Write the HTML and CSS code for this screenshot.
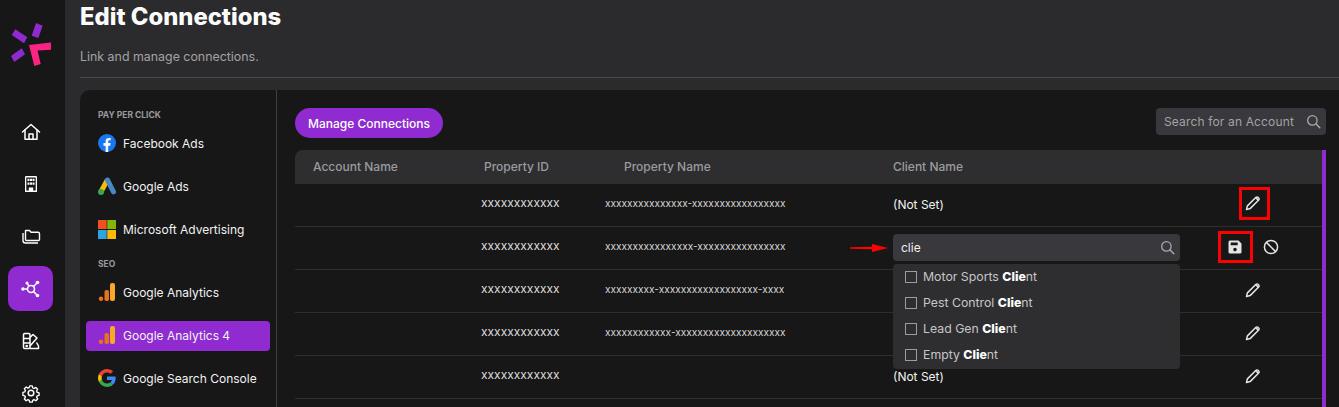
FILE: index.html
```html
<!DOCTYPE html>
<html lang="en">
<head>
    <meta charset="UTF-8">
    <meta name="viewport" content="width=device-width, initial-scale=1.0">
    <title>Edit Connections</title>
    <link rel="stylesheet" href="styles.css">
</head>
<body>

<svg class="sprites" width="0" height="0">
    <symbol id="pencil" viewBox="0 0 16 16">
        <path d="M1.500 14.500l.9-3.600 8.600-8.600a1.400 1.400 0 0 1 2 0l.7.7a1.400 1.400 0 0 1 0 2l-8.600 8.600z" fill="none" stroke="currentColor" stroke-width="1.500" stroke-linejoin="round"/>
        <path d="M11.200 1.900l2.900 2.900-1.200 1.200-2.900-2.900z" fill="currentColor"/>
    </symbol>
    <symbol id="search" viewBox="0 0 16 16">
        <circle cx="6.800" cy="6.800" r="5" fill="none" stroke="currentColor" stroke-width="1.400"/>
        <path d="M10.500 10.500l4.200 4.200" stroke="currentColor" stroke-width="1.600" stroke-linecap="round"/>
    </symbol>
    <symbol id="analytics" viewBox="0 0 18 20">
        <rect x="12" y="1" width="5" height="18" rx="2" fill="#f9a825"/>
        <rect x="6.500" y="8" width="4.500" height="11" rx="1.800" fill="#e8711a"/>
        <circle cx="3" cy="16.800" r="2.200" fill="#e8711a"/>
    </symbol>
</svg>

<div class="app">
    <aside class="rail">
        <svg class="logo" width="65" height="90" viewBox="0 0 65 90">
            <polygon points="36,23 42.700,25.700 38.300,38 31.700,35.700" fill="#8e2bd0"/>
            <polygon points="15.300,29.300 27.300,37.300 24,43.300 11.700,35" fill="#8e2bd0"/>
            <polygon points="11,56 21.700,48.300 25,54.300 14.300,62" fill="#8e2bd0"/>
            <polygon points="29,45 51,42.500 51,49.700 37.500,50.500 40.700,64 34.300,66" fill="#ff2384"/>
        </svg>
        <nav class="rail-icons">
            <a class="rail-link">
                <svg width="20" height="20" viewBox="0 1 20 20" fill="none" stroke="#fff" stroke-width="1.500" stroke-linejoin="round" stroke-linecap="round"><path d="M1.500 10L10 2.500l8.500 7.500"/><path d="M4 8v9.200h12V8"/><path d="M8 17v-5h4v5"/></svg>
            </a>
            <a class="rail-link">
                <svg width="20" height="20" viewBox="0 1.500 20 20"><path fill-rule="evenodd" fill="#fff" d="M5 2.500h10a1 1 0 0 1 1 1v15H4v-15a1 1 0 0 1 1-1zM5.300 4v13h2.500v-3h4.400v3h2.500V4zM6.500 5.200h2v2.300h-2zM9 5.200h2v2.300H9zM11.500 5.200h2v2.300h-2zM6.500 9h2v2.300h-2zM9 9h2v2.300H9zM11.500 9h2v2.300h-2z"/></svg>
            </a>
            <a class="rail-link">
                <svg width="20" height="20" viewBox="0 1 20 20" fill="none" stroke="#fff" stroke-width="1.400" stroke-linejoin="round"><path d="M4.500 13.500V4.500h4l1.500 1.700h7a1.500 1.500 0 0 1 1.500 1.500v5.800a1 1 0 0 1-1 1h-12a1 1 0 0 1-1-1z"/><path d="M2 7v7.500a2.500 2.500 0 0 0 2.500 2.500h12.500"/></svg>
            </a>
            <a class="rail-link active">
                <svg width="22" height="22" viewBox="0 0 22 22" fill="none" stroke="#fff" stroke-width="1.600"><circle cx="11" cy="11" r="3.500"/><path d="M13.500 8.500l3-3M13.500 13.500l3 3M7.500 11h-3M9 8L7.500 6"/><circle cx="17.500" cy="4.500" r="1.800" fill="#fff" stroke="none"/><circle cx="17.500" cy="17.500" r="1.800" fill="#fff" stroke="none"/><circle cx="3" cy="11" r="1.800" fill="#fff" stroke="none"/><circle cx="7" cy="5" r="1.500" fill="#fff" stroke="none"/></svg>
            </a>
            <a class="rail-link">
                <svg width="20" height="20" viewBox="0 0 20 20" fill="none" stroke="#fff" stroke-width="1.500" stroke-linejoin="round"><rect x="2.500" y="2.500" width="6.500" height="15" rx="1.200"/><path d="M2.500 7.500H9M2.500 12H9"/><path d="M9 6.500l3-3 4 3.500-7 8"/><path d="M9 17.500h8.500v-2.500l-2-3.500"/><circle cx="5.700" cy="15" r=".6" fill="#fff"/></svg>
            </a>
            <a class="rail-link">
                <svg width="20" height="20" viewBox="0 0 20 20" fill="none" stroke="#fff" stroke-width="1.500" stroke-linejoin="round"><circle cx="10" cy="10" r="2.800"/><path d="M8.600 2h2.800l.5 2.300 1.500.7 2-1.200 2 2-1.200 2 .7 1.500 2.100.5v2.800l-2.100.6-.7 1.400 1.200 2-2 2-2-1.200-1.500.7-.5 2.100H8.600l-.5-2.100-1.500-.7-2 1.200-2-2 1.200-2-.7-1.400-2.100-.6V9.300l2.100-.5.700-1.500-1.200-2 2-2 2 1.200 1.500-.7z" transform="translate(1 1) scale(.9)"/></svg>
            </a>
        </nav>
    </aside>

    <main class="main">
        <header class="page-head">
            <h1>Edit Connections</h1>
            <p>Link and manage connections.</p>
        </header>

        <section class="panel">
            <aside class="side">
                <div class="side-group">
                    <h4>PAY PER CLICK</h4>
                    <a class="side-item">
                        <svg width="18" height="18" viewBox="0 0 18 18"><circle cx="9" cy="9" r="9" fill="#1877f2"/><path d="M7.600 18v-6.300H5.500V9h2.100V7.300c0-2.200 1.300-3.400 3.200-3.400.9 0 1.900.2 1.900.2v2.100h-1.100c-1.100 0-1.400.6-1.400 1.300V9h2.400l-.4 2.700h-2V18z" fill="#fff"/></svg>
                        Facebook Ads
                    </a>
                    <a class="side-item">
                        <svg width="18" height="18" viewBox="0 0 18 18"><path d="M9.300 3L3 14.800" stroke="#fbbc04" stroke-width="5" fill="none"/><path d="M9.500 3l6 11.800" stroke="#4a86c8" stroke-width="5" stroke-linecap="round" fill="none"/><circle cx="3" cy="15" r="3" fill="#34a853"/></svg>
                        Google Ads
                    </a>
                    <a class="side-item">
                        <svg width="18" height="19" viewBox="0 0 18 19"><rect width="8.700" height="9" fill="#f25022"/><rect x="9.300" width="8.700" height="9" fill="#7fba00"/><rect y="10" width="8.700" height="9" fill="#2da5e0"/><rect x="9.300" y="10" width="8.700" height="9" fill="#ffb900"/></svg>
                        Microsoft Advertising
                    </a>
                </div>
                <div class="side-group">
                    <h4>SEO</h4>
                    <a class="side-item">
                        <svg width="18" height="20"><use href="#analytics"/></svg>
                        Google Analytics
                    </a>
                    <a class="side-item active">
                        <svg width="18" height="20"><use href="#analytics"/></svg>
                        Google Analytics 4
                    </a>
                    <a class="side-item">
                        <svg width="18" height="18" viewBox="0 0 48 48">
                            <path fill="#EA4335" d="M24 9.500c3.540 0 6.710 1.220 9.210 3.600l6.850-6.850C35.900 2.380 30.470 0 24 0 14.620 0 6.510 5.380 2.560 13.220l7.980 6.190C12.430 13.720 17.740 9.500 24 9.500z"/>
                            <path fill="#4285F4" d="M46.980 24.550c0-1.570-.15-3.090-.38-4.550H24v9.020h12.940c-.58 2.960-2.260 5.480-4.780 7.180l7.730 6c4.510-4.180 7.090-10.360 7.090-17.650z"/>
                            <path fill="#FBBC05" d="M10.530 28.590c-.48-1.450-.76-2.990-.76-4.590s.27-3.140.76-4.590l-7.980-6.190C.92 16.460 0 20.120 0 24c0 3.880.92 7.540 2.560 10.780l7.970-6.190z"/>
                            <path fill="#34A853" d="M24 48c6.480 0 11.930-2.130 15.890-5.810l-7.730-6c-2.150 1.450-4.920 2.300-8.160 2.300-6.260 0-11.570-4.220-13.470-9.910l-7.980 6.190C6.510 42.620 14.620 48 24 48z"/>
                        </svg>
                        Google Search Console
                    </a>
                </div>
            </aside>

            <div class="content">
                <div class="toolbar">
                    <button class="btn-manage">Manage Connections</button>
                    <div class="search-box account-search">
                        <span>Search for an Account</span>
                        <svg width="15" height="15"><use href="#search"/></svg>
                    </div>
                </div>

                <div class="table-wrap">
                    <div class="table">
                        <div class="table-head">
                            <span>Account Name</span>
                            <span>Property ID</span>
                            <span>Property Name</span>
                            <span>Client Name</span>
                        </div>

                        <div class="row">
                            <span></span>
                            <span class="prop-id">xxxxxxxxxxxx</span>
                            <span class="prop-name">xxxxxxxxxxxxxxx-xxxxxxxxxxxxxxxxx</span>
                            <span class="client">(Not Set)</span>
                            <div class="actions">
                                <span class="icon-btn marked pencil-mark"><svg width="16" height="16"><use href="#pencil"/></svg></span>
                            </div>
                        </div>

                        <div class="row">
                            <span></span>
                            <span class="prop-id">xxxxxxxxxxxx</span>
                            <span class="prop-name">xxxxxxxxxxxxxxxx-xxxxxxxxxxxxxxxx</span>
                            <div class="client-edit">
                                <svg class="arrow" width="38" height="10" viewBox="0 0 38 10"><path d="M0 4.200L22 3.800V1L38 5 22 9V6.200L0 5.800z" fill="#f00"/></svg>
                                <div class="search-box client-search">
                                    <span>clie</span>
                                    <svg width="15" height="15"><use href="#search"/></svg>
                                </div>
                                <ul class="dropdown">
                                    <li><i class="check"></i><span>Motor Sports <b>Clie</b>nt</span></li>
                                    <li><i class="check"></i><span>Pest Control <b>Clie</b>nt</span></li>
                                    <li><i class="check"></i><span>Lead Gen <b>Clie</b>nt</span></li>
                                    <li><i class="check"></i><span>Empty <b>Clie</b>nt</span></li>
                                </ul>
                            </div>
                            <div class="actions editing">
                                <span class="icon-btn marked save-mark">
                                    <svg width="16" height="16" viewBox="0 0 16 16"><path fill="currentColor" fill-rule="evenodd" d="M3 1.500h8.500L14.500 4.500V13a1.500 1.500 0 0 1-1.500 1.500H3A1.500 1.500 0 0 1 1.500 13V3A1.500 1.500 0 0 1 3 1.500zM3.700 3.500v2.800h7V3.500zM8 8.800a1.800 1.800 0 1 0 0 3.600 1.800 1.800 0 0 0 0-3.600z"/></svg>
                                </span>
                                <span class="icon-btn">
                                    <svg width="16" height="16" viewBox="0 0 16 16" fill="none" stroke="currentColor" stroke-width="1.500"><circle cx="8" cy="8" r="6.600"/><path d="M3.400 3.400l9.200 9.200"/></svg>
                                </span>
                            </div>
                        </div>

                        <div class="row">
                            <span></span>
                            <span class="prop-id">xxxxxxxxxxxx</span>
                            <span class="prop-name">xxxxxxxxx-xxxxxxxxxxxxxxxxxx-xxxx</span>
                            <span class="client"></span>
                            <div class="actions">
                                <span class="icon-btn"><svg width="16" height="16"><use href="#pencil"/></svg></span>
                            </div>
                        </div>

                        <div class="row">
                            <span></span>
                            <span class="prop-id">xxxxxxxxxxxx</span>
                            <span class="prop-name">xxxxxxxxxxxx-xxxxxxxxxxxxxxxxxxxx</span>
                            <span class="client"></span>
                            <div class="actions">
                                <span class="icon-btn"><svg width="16" height="16"><use href="#pencil"/></svg></span>
                            </div>
                        </div>

                        <div class="row">
                            <span></span>
                            <span class="prop-id">xxxxxxxxxxxx</span>
                            <span class="prop-name"></span>
                            <span class="client">(Not Set)</span>
                            <div class="actions">
                                <span class="icon-btn"><svg width="16" height="16"><use href="#pencil"/></svg></span>
                            </div>
                        </div>
                    </div>
                    <div class="scroll-thumb"></div>
                </div>
            </div>
        </section>
    </main>
</div>

</body>
</html>
```
FILE: styles.css
```css
* {
    margin: 0;
    padding: 0;
    box-sizing: border-box;
    font-family: Inter, "Open Sans", sans-serif;
}

html, body {
    height: 100%;
    overflow: hidden;
}

body {
    background-color: #2b2b2e;
    color: #fff;
}

.sprites {
    position: absolute;
}

.app {
    display: flex;
    height: 407px;
}

/* left icon rail */
.rail {
    width: 65px;
    flex-shrink: 0;
    background: #171717;
    display: flex;
    flex-direction: column;
    align-items: center;
}

.logo {
    display: block;
    flex-shrink: 0;
}

.rail-icons {
    display: flex;
    flex-direction: column;
    gap: 7px;
    margin-top: 20px;
    margin-right: 4px;
}

.rail-link {
    width: 45px;
    height: 45px;
    display: flex;
    align-items: center;
    justify-content: center;
    border-radius: 10px;
}

.rail-link.active {
    background: #8f2bd1;
}

/* main area */
.main {
    flex: 1;
    min-width: 0;
    padding-left: 15px;
    overflow: hidden;
}

.page-head {
    height: 78px;
    border-bottom: 1px solid #4a4a4d;
    margin-bottom: 12px;
}

.page-head h1 {
    font-size: 23.800px;
    font-weight: 800;
    line-height: 34px;
}

.page-head p {
    font-size: 12.400px;
    color: #a3a3a5;
    margin-top: 14px;
    line-height: 18px;
}

.panel {
    display: flex;
    background: #171717;
    border-radius: 10px 0 0 0;
    height: 340px;
}

/* connection list */
.side {
    width: 197px;
    flex-shrink: 0;
    border-right: 1px solid #3f3f42;
    padding: 19px 6px 0;
    display: flex;
    flex-direction: column;
    gap: 13px;
}

.side-group {
    display: flex;
    flex-direction: column;
    gap: 13px;
}

.side-group h4 {
    font-size: 8.500px;
    font-weight: 700;
    line-height: 12px;
    color: #9a9a9c;
    padding-left: 12px;
    margin-bottom: -5px;
}

.side-item {
    height: 30px;
    display: flex;
    align-items: center;
    gap: 7px;
    padding-left: 12px;
    padding-bottom: 2px;
    border-radius: 4px;
    font-size: 12px;
    color: #f2f2f2;
    white-space: nowrap;
}

.side-item svg {
    flex-shrink: 0;
}

.side-item.active {
    background: #8f2bd1;
}

/* right side */
.content {
    flex: 1;
    min-width: 0;
    padding: 18px 13px 0 18px;
}

.toolbar {
    display: flex;
    justify-content: space-between;
    align-items: flex-start;
    margin-bottom: 12px;
}

.btn-manage {
    width: 148px;
    height: 30px;
    background: #8f2bd1;
    color: #fff;
    border: none;
    border-radius: 15px;
    font-size: 12px;
    font-weight: 500;
    cursor: pointer;
}

.search-box {
    display: flex;
    align-items: center;
    justify-content: space-between;
    height: 27px;
    background: #39383c;
    border-radius: 4px;
}

.search-box svg {
    color: #a8a8aa;
}

.account-search {
    width: 170px;
    padding: 0 5px 0 8px;
    font-size: 12px;
    letter-spacing: .15px;
    color: #a3a3a5;
}

.table-wrap {
    display: flex;
}

.table {
    flex: 1;
    min-width: 0;
}

.scroll-thumb {
    width: 4px;
    background: #8f2bd1;
    height: 260px;
}

.table-head {
    display: grid;
    grid-template-columns: 171px 140px 269px 1fr;
    align-items: center;
    height: 34px;
    padding-left: 18px;
    padding-bottom: 2px;
    background: #2e2e31;
    border-radius: 8px 0 0 0;
    font-size: 12px;
    font-weight: 500;
    color: #9b9b9d;
}

.row {
    display: grid;
    grid-template-columns: 186px 124px 288px 287px 1fr;
    align-items: center;
    height: 43px;
    padding-bottom: 2px;
    border-bottom: 1px solid #2e2e30;
}

.prop-id {
    font-size: 12px;
    color: #dedede;
    margin-bottom: 3px;
}

.prop-name {
    font-size: 10.100px;
    color: #d6d6d6;
    white-space: nowrap;
    margin-bottom: 3px;
}

.client {
    font-size: 12px;
    color: #f2f2f2;
}

.client-edit {
    position: relative;
}

.client-search {
    padding: 0 5px 0 8px;
    font-size: 12px;
    color: #f2f2f2;
}

.arrow {
    position: absolute;
    left: -43px;
    top: 9px;
}

.dropdown {
    position: absolute;
    top: 30px;
    left: 0;
    right: 0;
    height: 105px;
    background: #2e2e31;
    border-radius: 4px;
    list-style: none;
    z-index: 5;
}

.dropdown li {
    display: flex;
    align-items: center;
    gap: 6px;
    height: 26px;
    padding-left: 12px;
    font-size: 12.300px;
    color: #c6c6c8;
}

.dropdown b {
    color: #fff;
    font-weight: 800;
}

.check {
    width: 12px;
    height: 12px;
    border: 1px solid #9c9c9e;
    flex-shrink: 0;
}

.actions {
    display: flex;
    justify-content: center;
    align-items: center;
    gap: 20px;
    padding-left: 4px;
}

.icon-btn {
    display: flex;
    align-items: center;
    justify-content: center;
    color: #e4e4e4;
}

.icon-btn svg {
    display: block;
}

.marked {
    border: 3px solid #f00;
}

.pencil-mark {
    width: 31px;
    height: 33px;
    margin-left: 3px;
    margin-top: -2px;
    padding-right: 3px;
}

.save-mark {
    width: 35px;
    height: 32px;
    margin-left: -10px;
    margin-right: -10px;
}
```
